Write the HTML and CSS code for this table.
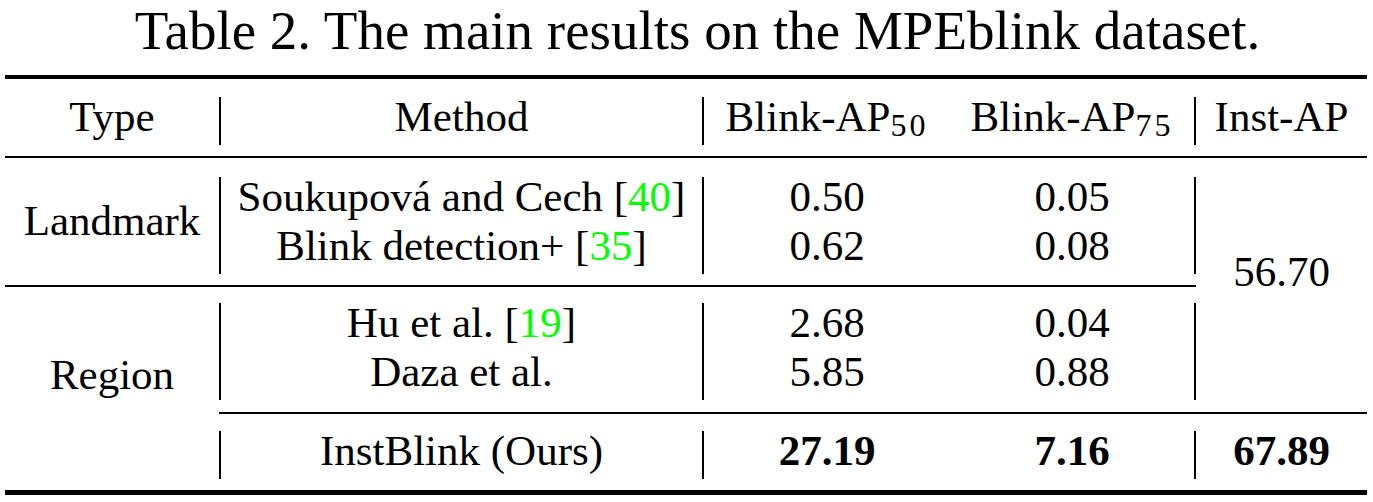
FILE: index.html
```html
<!DOCTYPE html>
<html lang="en">
<head>
    <meta charset="UTF-8">
    <meta name="viewport" content="width=device-width, initial-scale=1.0">
    <title>Table 2 - MPEblink results</title>
    <link rel="stylesheet" href="styles.css">
</head>
<body>
    <div class="page">
        <p class="caption">Table 2. The main results on the MPEblink dataset.</p>

        <table class="results">
            <colgroup>
                <col class="col-type">
                <col class="col-method">
                <col class="col-ap50">
                <col class="col-ap75">
                <col class="col-inst">
            </colgroup>

            <!-- header -->
            <tr class="row-head">
                <td class="ruled"><div class="txt">Type</div></td>
                <td class="ruled"><div class="bar both"><div class="txt">Method</div></div></td>
                <td class="ruled"><div class="txt">Blink-AP<sub>50</sub></div></td>
                <td class="ruled"><div class="bar right"><div class="txt">Blink-AP<sub>75</sub></div></div></td>
                <td class="ruled"><div class="txt">Inst-AP</div></td>
            </tr>

            <!-- landmark based -->
            <tr class="row-landmark">
                <td class="ruled type-cell landmark"><div class="txt">Landmark</div></td>
                <td class="ruled">
                    <div class="bar both">
                        <div class="txt">Soukupová and Cech [<span class="cite">40</span>]<br>Blink detection+ [<span class="cite">35</span>]</div>
                    </div>
                </td>
                <td class="ruled"><div class="txt">0.50<br>0.62</div></td>
                <td class="ruled"><div class="bar right"><div class="txt">0.05<br>0.08</div></div></td>
                <td class="ruled inst-shared" rowspan="2"><div class="txt">56.70</div></td>
            </tr>

            <!-- region based -->
            <tr class="row-region">
                <td class="type-cell region" rowspan="2"><div class="txt">Region</div></td>
                <td class="ruled">
                    <div class="bar both">
                        <div class="txt">Hu et al. [<span class="cite">19</span>]<br>Daza et al.</div>
                    </div>
                </td>
                <td class="ruled"><div class="txt">2.68<br>5.85</div></td>
                <td class="ruled"><div class="bar right"><div class="txt">0.04<br>0.88</div></div></td>
            </tr>

            <!-- ours -->
            <tr class="row-ours">
                <td><div class="bar both"><div class="txt">InstBlink (Ours)</div></div></td>
                <td><div class="txt best">27.19</div></td>
                <td><div class="bar right"><div class="txt best">7.16</div></div></td>
                <td><div class="txt best">67.89</div></td>
            </tr>
        </table>
    </div>
</body>
</html>
```

FILE: styles.css
```css
body {
    margin: 0;
    padding: 0;
    background-color: #fff;
    color: #000;
    font-family: "Liberation Serif", "Times New Roman", serif;
}
.page {
    width: 1373px;
}
.caption {
    margin: 0 0 14px 0;
    padding-left: 22px;
    font-size: 55px;
    line-height: 61px;
    text-align: center;
}
.results {
    margin-left: 5px;
    width: 1362px;
    table-layout: fixed;
    border-collapse: separate;
    border-spacing: 0;
    border-top: 4px solid #000;
    border-bottom: 5px solid #000;
    font-size: 43px;
}
.col-type { width: 214px; }
.col-method { width: 485px; }
.col-ap50 { width: 246px; }
.col-ap75 { width: 246px; }
.col-inst { width: 171px; }

.results td {
    padding: 17px 0 11px 0;
    text-align: center;
    vertical-align: top;
}
.results td.ruled {
    border-bottom: 2px solid #000;
}
.row-head td { padding-top: 18px; }
.row-landmark td { padding-top: 19px; }
.row-region td { padding-top: 16px; padding-bottom: 12px; }

.bar {
    display: flow-root;
    border-color: #000;
    border-style: solid;
    border-width: 0;
}
.bar.both {
    border-left-width: 2px;
    border-right-width: 2px;
}
.bar.right {
    border-right-width: 2px;
}
.txt {
    line-height: 49px;
    margin: -5px 0 4px 0;
    white-space: nowrap;
}
.results sub {
    font-size: 32px;
    letter-spacing: 3px;
    line-height: 0;
    vertical-align: -5px;
}
.cite {
    color: #00ff00;
}
.best {
    font-weight: bold;
}

/* multirow labels */
.results td.landmark { padding-top: 43px; }
.results td.region { padding-top: 68px; }
.results td.inst-shared { padding-top: 94px; }
```
